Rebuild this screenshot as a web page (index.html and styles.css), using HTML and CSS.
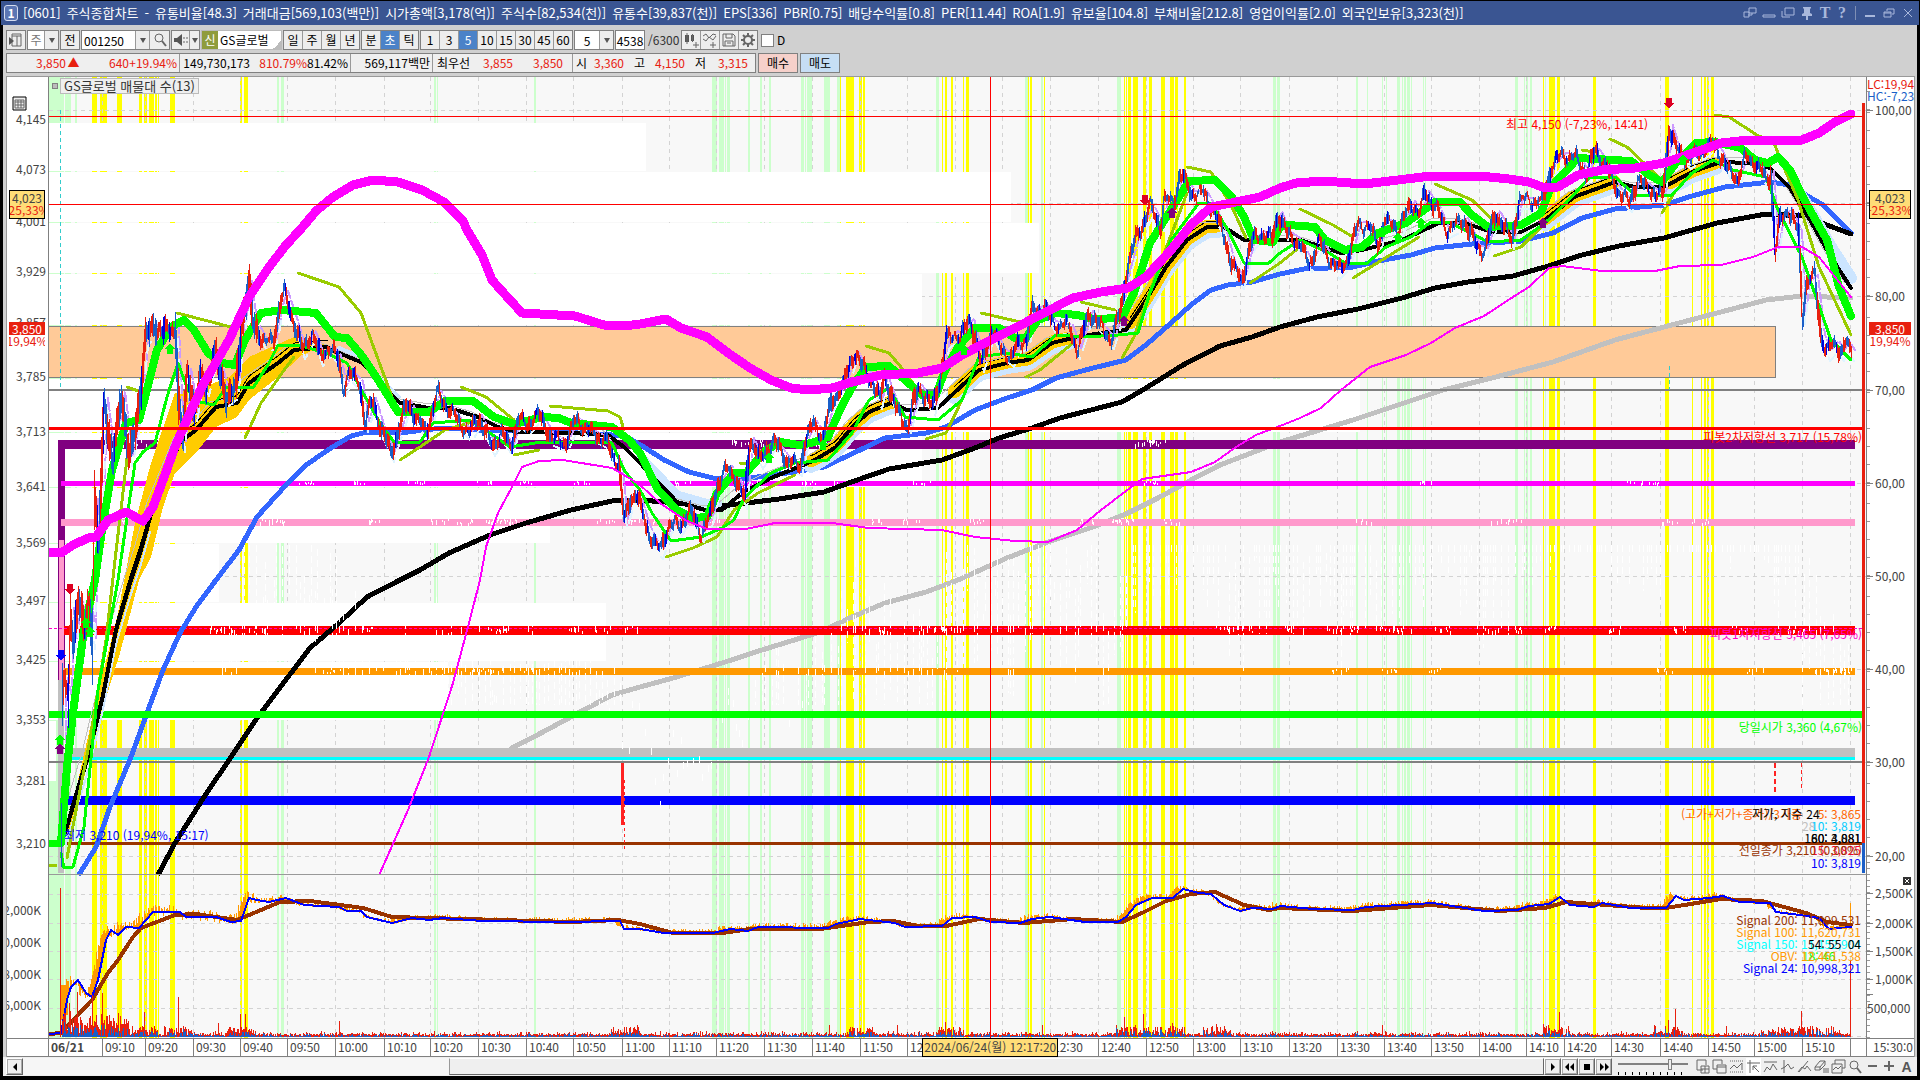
FILE: index.html
```html
<!DOCTYPE html>
<html lang="ko">
<head>
    <meta charset="UTF-8">
    <meta name="viewport" content="width=device-width, initial-scale=1.0">
    <title>[0601] 주식종합차트</title>
    <link rel="stylesheet" href="styles.css">
</head>
<body>
    <header class="titlebar">
        <span class="win-no">1</span>
        <h1>
            <span>[0601]</span><span>주식종합차트</span><span>-</span><span>유통비율[48.3]</span><span>거래대금[569,103(백만)]</span>
            <span>시가총액[3,178(억)]</span><span>주식수[82,534(천)]</span><span>유통수[39,837(천)]</span><span>EPS[336]</span><span>PBR[0.75]</span>
            <span>배당수익률[0.8]</span><span>PER[11.44]</span><span>ROA[1.9]</span><span>유보율[104.8]</span><span>부채비율[212.8]</span>
            <span>영업이익률[2.0]</span><span>외국인보유[3,323(천)]</span>
        </h1>
        <div class="win-buttons">
            <button aria-label="연결"><svg width="14" height="14" viewBox="0 0 14 14"><path d="M6 2h7v5H6zM1 6h5v5H1zM5 9h4V7"/></svg></button>
            <button aria-label="내리기"><svg width="14" height="14" viewBox="0 0 14 14"><path d="M1 9h12v2H1z"/></svg></button>
            <button aria-label="복사"><svg width="14" height="14" viewBox="0 0 14 14"><path d="M4 2h9v7H4zM1 5v6h8"/></svg></button>
            <button aria-label="고정"><svg width="14" height="14" viewBox="0 0 14 14"><path class="solid" d="M3 1h8v1l-1 1v4l2 1v2H8v4H6v-4H2V8l2-1V3L3 2z"/></svg></button>
            <button class="serif">T</button>
            <button class="serif">?</button>
            <i></i>
            <button aria-label="최소화"><svg width="14" height="14" viewBox="0 0 14 14"><path class="solid" d="M2 9h10v2H2z"/></svg></button>
            <button aria-label="이전 크기"><svg width="14" height="14" viewBox="0 0 14 14"><path d="M5 5V3h7v5h-2M2 6h7v5H2zM2 7h7"/></svg></button>
            <button aria-label="닫기"><svg width="14" height="14" viewBox="0 0 14 14"><path d="M3 3l8 8M11 3l-8 8"/></svg></button>
        </div>
    </header>

    <main>
        <div class="toolbar">
            <button class="tool" aria-label="목록"><svg width="16" height="16" viewBox="0 0 16 16"><path d="M4 2h9v12H4zM4 4h9M9 4v10"/><path class="dark" d="M1 5l5 4-5 4z"/></svg></button>
            <div class="combo"><button class="c17 dim">주</button><button class="arrow" aria-label="열기"></button></div>
            <button class="tool">전</button>
            <div class="combo">
                <input class="c54" type="text" value="001250" aria-label="종목코드"><button class="arrow" aria-label="종목 목록"></button><button class="tool" aria-label="찾기"><svg width="16" height="16" viewBox="0 0 16 16"><circle cx="7" cy="6" r="4"/><path class="fat" d="M10 9l4 5"/></svg></button>
            </div>
            <div class="combo"><button class="tool" aria-label="소리"><svg width="16" height="16" viewBox="0 0 16 16"><path class="dark" d="M1 6h3l5-4v12L4 10H1z"/><path d="M11 5v2M11 9v2M14 5v2M14 9v2"/></svg></button><button class="arrow small" aria-label="소리 설정"></button></div>
            <div class="stock"><b>신</b><span>GS글로벌</span></div>
            <div class="group"><button>일</button><button>주</button><button>월</button><button>년</button></div>
            <div class="group"><button>분</button><button class="on">초</button><button>틱</button></div>
            <div class="group"><button>1</button><button>3</button><button class="on">5</button><button>10</button><button>15</button><button>30</button><button>45</button><button>60</button></div>
            <div class="combo"><input class="c25 mid" type="text" value="5" aria-label="주기"><button class="arrow" aria-label="주기 목록"></button></div>
            <div class="combo"><input class="c29 mid" type="text" value="4538" aria-label="조회 수"></div>
            <span class="total">/6300</span>
            <div class="group">
                <button aria-label="차트 추가"><svg width="16" height="16" viewBox="0 0 16 16"><path class="dark" d="M2 3h4v7H2zM8 3h3v6H8z"/><path d="M4 1v11M9.5 2v8M10 13h6M13 10v6"/></svg></button>
                <button aria-label="지표 추가"><svg width="16" height="16" viewBox="0 0 16 16"><path d="M1 4l3-2 3 4 4-4 3 1M1 7l3 2 3-4 4 3 3-4M8 13h6M11 10v6"/></svg></button>
                <button aria-label="저장"><svg width="16" height="16" viewBox="0 0 16 16"><path d="M2 2h10l2 2v10H2zM5 2v4h6V2M4 14V9h8v5M6 11h4"/></svg></button>
                <button aria-label="설정"><svg width="16" height="16" viewBox="0 0 16 16"><circle cx="8" cy="8" r="4" class="fat"/><path class="fat" d="M8 1v3M8 12v3M1 8h3M12 8h3M3 3l2 2M11 11l2 2M13 3l-2 2M5 11l-2 2"/></svg></button>
            </div>
            <label class="check"><input type="checkbox">D</label>
        </div>

        <div class="quote">
            <div class="prices">
                <span class="up">3,850</span><span class="up tri">▲</span><span class="up">640</span><span class="up line">+19.94%</span>
                <span>149,730,173</span><span class="up">810.79%</span><span class="line">81.42%</span>
                <span class="line">569,117백만</span>
                <span>최우선</span><span class="up">3,855</span><span class="up">3,850</span><i class="line"></i>
                <span>시</span><span class="up">3,360</span><span>고</span><span class="up">4,150</span><span>저</span><span class="up">3,315</span>
            </div>
            <button class="buy">매수</button>
            <button class="sell">매도</button>
        </div>

        <section class="chart">
            <div class="axis left">
                <ul class="scale" id="scale-left"></ul>
                <svg class="grid-icon" width="15" height="15" viewBox="0 0 15 15"><path d="M1 1h13v13H1z" class="box"/><path d="M3 4h9v8H3zM3 6h9M3 9h9M6 4v8M9 4v8"/></svg>
                <p class="cross-tag"><span>4,023</span><span class="up">-25,33%</span></p>
                <p class="now-tag"><b>3,850</b><span>19,94%</span></p>
            </div>
            <div class="plot" id="plot">
                <svg id="canvas" viewBox="49 77 1817 961" preserveAspectRatio="none"></svg>
                <p class="legend"><i></i><span>GS글로벌 매물대 수(13)</span></p>
            </div>
            <div class="axis right">
                <ul class="scale" id="scale-right"></ul>
                <p class="limits"><span class="up">LC:19,94</span><span class="down">HC:-7,23</span></p>
                <p class="cross-tag"><span>4,023</span><span class="up">-25,33%</span></p>
                <p class="now-tag"><b>3,850</b><span>19,94%</span></p>
                <button class="close-pane" aria-label="닫기"><svg width="8" height="8" viewBox="0 0 8 8"><path d="M2 2l4 4M6 2l-4 4"/></svg></button>
            </div>
            <div class="time">
                <ol id="times"></ol>
                <p class="time-tag">2024/06/24(월) 12:17:20</p>
            </div>
        </section>

        <footer class="bottom">
            <button class="step" aria-label="왼쪽"><svg width="12" height="12" viewBox="0 0 12 12"><path d="M8 2v8L4 6z"/></svg></button>
            <div class="track"><div class="thumb"></div></div>
            <button class="step" aria-label="재생"><svg width="12" height="12" viewBox="0 0 12 12"><path d="M4 2v8l4-4z"/></svg></button>
            <button class="step" aria-label="뒤로"><svg width="12" height="12" viewBox="0 0 12 12"><path d="M5 2v8L1 6zM10 2v8L6 6z"/></svg></button>
            <button class="step" aria-label="정지"><svg width="12" height="12" viewBox="0 0 12 12"><path d="M3 3h6v6H3z"/></svg></button>
            <button class="step" aria-label="앞으로"><svg width="12" height="12" viewBox="0 0 12 12"><path d="M2 2v8l4-4zM7 2v8l4-4z"/></svg></button>
            <div class="speed"><input type="range" min="0" max="100" value="75" aria-label="속도"></div>
            <div class="icons">
                <button aria-label="추가"><svg width="15" height="15" viewBox="0 0 15 15"><path d="M8 11H2V1h9v5M6 7h8v7H6zM10 7v7M6 10h8"/></svg></button>
                <button aria-label="겹치기"><svg width="15" height="15" viewBox="0 0 15 15"><path d="M5 10H1V1h9v4M5 6h9v8H5zM5 8h9"/></svg></button>
                <button aria-label="구간"><svg width="15" height="15" viewBox="0 0 15 15"><path class="dash" d="M1 2h13M1 13h13"/><path d="M1 10l4-4 3 3 5-5M13 4v7"/></svg></button>
                <button class="on" aria-label="십자선"><svg width="15" height="15" viewBox="0 0 15 15"><path d="M1 4h13M4 1v13M7 7l6 6M7 11V7h4"/></svg></button>
                <button aria-label="수평선"><svg width="15" height="15" viewBox="0 0 15 15"><path d="M1 3h13M1 13l3-5 3 3 3-6 4 6"/></svg></button>
                <button aria-label="수직선"><svg width="15" height="15" viewBox="0 0 15 15"><path d="M4 1v13M1 10l4-2 3-3 3 5 3-2"/></svg></button>
                <button aria-label="추세선"><svg width="15" height="15" viewBox="0 0 15 15"><path d="M2 13L11 2M1 13l4-5 3 2 2-3 4 5"/></svg></button>
                <button aria-label="지우기"><svg width="15" height="15" viewBox="0 0 15 15"><path d="M1 8l5-6h5v4l-5 5H1zM1 8h5l5-6M6 8v3M10 9v5M12 9v5M14 9v5"/></svg></button>
                <button aria-label="그림"><svg width="15" height="15" viewBox="0 0 15 15"><path d="M4 5V1h10v8h-3M1 5h10v9H1zM2 11l3-3 2 2 3-3"/></svg></button>
                <button aria-label="돋보기"><svg width="15" height="15" viewBox="0 0 15 15"><circle cx="6" cy="6" r="4"/><path class="fat" d="M9 9l4 5"/></svg></button>
                <button aria-label="축소"><svg width="15" height="15" viewBox="0 0 15 15"><path class="fat" d="M3 7h9"/></svg></button>
                <button aria-label="확대"><svg width="15" height="15" viewBox="0 0 15 15"><path class="fat" d="M2 7h10M7 2v10"/></svg></button>
                <button class="letter">A</button>
            </div>
        </footer>
    </main>

    <script src="chart.js"></script>
</body>
</html>
```
FILE: styles.css
```css
* {
    box-sizing: border-box;
}

body {
    margin: 0;
    padding: 1px 1px 4px;
    height: 100vh;
    display: flex;
    flex-direction: column;
    background: #000;
    color: #000;
    font: 12px/14px "Noto Sans CJK KR", sans-serif;
    overflow: hidden;
}

h1, p, ul, ol {
    margin: 0;
    padding: 0;
    font-weight: normal;
    list-style: none;
}

button, input {
    font: inherit;
    color: inherit;
    margin: 0;
    padding: 0;
    border: 0;
    border-radius: 0;
    background: none;
}

svg {
    display: block;
    fill: none;
    stroke: #666;
}

.up {
    color: #e8200f;
}

.down {
    color: #1a5fc8;
}

/* title bar */
.titlebar {
    display: flex;
    align-items: center;
    height: 24px;
    padding: 0 4px 0 3px;
    background: #3a5592;
    color: #fff;
}

.titlebar h1 {
    flex: 1;
    display: flex;
    gap: 6px;
    margin-left: 5px;
    font-size: 13px;
    line-height: 20px;
    white-space: nowrap;
}

.win-no {
    width: 14px;
    height: 16px;
    border: 1px solid #d5ddf0;
    border-radius: 3px;
    background: #5b76b4;
    text-align: center;
    font-weight: bold;
}

.win-buttons {
    display: flex;
    align-items: center;
    gap: 5px;
}

.win-buttons svg {
    stroke: #a9b8dc;
}

.win-buttons .solid {
    fill: #a9b8dc;
    stroke: none;
}

.win-buttons i {
    width: 1px;
    height: 14px;
    margin: 0 2px;
    background: #7f8fb5;
}

.win-buttons .serif {
    width: 12px;
    font: bold 16px/16px "Liberation Serif", serif;
    color: #a9b8dc;
}

main {
    flex: 1;
    min-height: 0;
    display: flex;
    flex-direction: column;
    margin: 0 2px;
    background: #d0d0d0;
}

/* tool bar */
.toolbar {
    display: flex;
    align-items: center;
    gap: 1px;
    height: 20px;
    margin: 5px 3px 3px;
}

.toolbar svg {
    margin: 0 auto;
}

.toolbar .dark {
    fill: #555;
    stroke: none;
}

.toolbar .fat, .bottom .fat {
    stroke-width: 2;
}

.tool, .combo, .group, .stock {
    height: 20px;
    border: 1px solid #808080;
    background: #ededed;
}

.tool {
    width: 20px;
}

.combo, .group, .stock {
    display: flex;
}

.combo .tool {
    height: 18px;
    border: 0;
    border-left: 1px solid #999;
}

.combo input, .combo button:first-child {
    height: 18px;
    background: #fff;
}

.combo .tool:first-child {
    width: 17px;
    border: 0;
    background: #ededed;
}

.c17 { width: 16px; }
.c25 { width: 24px; }
.c29 { width: 28px; }
.c54 { width: 53px; padding-left: 2px; }

.dim {
    color: #777;
}

.mid {
    text-align: center;
}

.arrow {
    width: 14px;
    height: 18px;
    border-left: 1px solid #999;
    background: #ededed;
}

.arrow.small {
    width: 10px;
}

.arrow::after {
    content: "";
    display: block;
    width: 0;
    margin: 0 auto;
    border: 3px solid transparent;
    border-top: 5px solid #555;
    border-bottom: 0;
}

.stock {
    width: 81px;
    background: #fff;
    border-color: #bbb;
    line-height: 18px;
    background-image: linear-gradient(135deg, transparent 50%, #bbb 50%);
    background-size: 8px 8px;
    background-position: right bottom;
    background-repeat: no-repeat;
}

.stock b {
    width: 16px;
    margin-right: 2px;
    background: #8f9c3c;
    color: #fff;
    font-weight: normal;
    text-align: center;
}

.group button {
    width: 19px;
    height: 18px;
    border-right: 1px solid #999;
}

.group button:last-child {
    width: 18px;
    border-right: 0;
}

.group .on {
    background: #4b82c8;
    color: #fff;
}

.total {
    width: 34px;
    padding-left: 2px;
    color: #333;
}

.check {
    display: flex;
    align-items: center;
    gap: 3px;
    margin-left: 2px;
}

.check input {
    appearance: none;
    width: 13px;
    height: 13px;
    border: 1px solid #808080;
    background: #fff;
}

/* quote line */
.quote {
    display: flex;
    gap: 2px;
    height: 20px;
    margin: 0 3px 3px;
}

.prices {
    display: grid;
    grid-template-columns: 59px 15px 48px 51px 70px 57px 44px 82px 37px 43px 50px 10px 14px 37px 21px 40px 21px 42px;
    width: 750px;
    border: 1px solid #808080;
    background: #efefef;
    line-height: 18px;
    text-align: right;
    white-space: nowrap;
}

.prices .tri {
    text-align: center;
}

.prices .line {
    border-right: 1px solid #999;
    padding-right: 2px;
}

.quote button {
    width: 40px;
    border: 1px solid #808080;
}

.quote .buy {
    background: #f6d0ca;
}

.quote .sell {
    background: #c6def4;
}

/* chart */
.chart {
    position: relative;
    flex: 1;
    min-height: 0;
    display: grid;
    grid-template-columns: 41px minmax(0, 1fr) 48px;
    grid-template-rows: minmax(0, 1fr) 19px;
    margin: 0 2px 0 3px;
    border: 1px solid #999;
    border-bottom: 0;
    background: #fff;
}

.axis {
    position: relative;
    min-height: 0;
    overflow: hidden;
    color: #444;
}

.axis.right {
    border-left: 1px solid #808080;
}

.scale {
    display: flex;
    flex-direction: column;
    height: 100%;
}

.scale li {
    flex-basis: 0;
    min-height: 0;
    display: flex;
    align-items: flex-end;
    justify-content: flex-end;
}

.scale span {
    margin-bottom: -7px;
    padding-right: 2px;
}

.scale .vol {
    padding-right: 5px;
}

.right .scale li {
    justify-content: flex-start;
    background: repeating-linear-gradient(to top, #999 0 1px, transparent 1px 18px) left / 3px 100% no-repeat;
}

.right .scale li.vol {
    background-image: repeating-linear-gradient(to top, #999 0 1px, transparent 1px 6px);
    padding: 0;
}

.right .scale span {
    padding: 0;
}

.right .scale span::before {
    content: "";
    display: inline-block;
    width: 6px;
    height: 1px;
    margin: 0 2px 4px 0;
    background: #808080;
}

.grid-icon {
    position: absolute;
    left: 5px;
    top: 19px;
}

.grid-icon .box {
    stroke: #000;
    fill: #eee;
}

.cross-tag, .now-tag {
    position: absolute;
    left: 2px;
    right: 3px;
    display: flex;
    flex-direction: column;
    align-items: center;
    line-height: 12px;
    white-space: nowrap;
    overflow: hidden;
}

.cross-tag {
    top: 113px;
    height: 29px;
    padding: 1px 0;
    border: 1px solid #000;
    background: #ffdd77;
}

.now-tag {
    top: 245px;
    color: #e8200f;
}

.now-tag b {
    align-self: stretch;
    line-height: 13px;
    text-align: center;
    font-weight: normal;
    background: #e8200f;
    color: #fff;
}

.limits {
    position: absolute;
    left: 0;
    top: 1px;
    line-height: 12px;
    white-space: nowrap;
}

.limits span {
    display: block;
}

.close-pane {
    position: absolute;
    right: 3px;
    top: 800px;
    width: 8px;
    height: 8px;
    background: #333;
}

.close-pane svg {
    stroke: #fff;
}

.plot {
    position: relative;
    min-height: 0;
    border-left: 1px solid #808080;
    background: #f8f8f8;
    overflow: hidden;
}

.plot svg {
    width: 100%;
    height: 100%;
    stroke: none;
    shape-rendering: crispEdges;
}

.legend {
    position: absolute;
    left: 3px;
    top: 1px;
    display: flex;
    align-items: center;
    gap: 2px;
    font-size: 13px;
}

.legend i {
    width: 6px;
    height: 6px;
    border: 1px solid #808080;
    background: #bbb;
}

.legend span {
    padding: 0 3px;
    border: 1px solid #bbb;
    background: #efefef;
    color: #333;
}

.note {
    position: absolute;
    line-height: 12px;
    white-space: nowrap;
}

.time {
    position: relative;
    grid-column: 1 / -1;
    border-top: 1px solid #808080;
    border-bottom: 1px solid #808080;
    color: #444;
}

.time ol {
    display: grid;
    height: 100%;
}

.time li {
    padding-left: 2px;
    border-left: 1px solid #808080;
    line-height: 16px;
    white-space: nowrap;
    overflow: hidden;
}

.time li:first-child {
    border: 0;
}

.time li.day {
    font-weight: bold;
}

.time li:last-child {
    padding-left: 6px;
}

.time-tag {
    position: absolute;
    left: 48%;
    top: -1px;
    height: 19px;
    padding: 0 1px;
    border: 1px solid #000;
    background: #ffdd77;
    line-height: 16px;
    white-space: nowrap;
}

/* scroll bar and small icons */
.bottom {
    display: flex;
    height: 19px;
    padding: 1px 3px;
    background: #efefef;
}

.bottom svg {
    margin: 0 auto;
}

.step {
    width: 17px;
    height: 17px;
    border: 1px solid;
    border-color: #fff #666 #666 #fff;
    background: #efefef;
    box-shadow: 0 0 0 1px #aaa inset;
}

.step svg {
    fill: #000;
    stroke: none;
}

.track {
    flex: 1;
    display: flex;
    justify-content: flex-end;
    background: #f6f6f6;
}

.thumb {
    width: 72%;
    border: 1px solid;
    border-color: #fff #666 #666 #999;
    background: #efefef;
}

.speed {
    width: 70px;
    margin: 0 7px 0 6px;
    background: repeating-linear-gradient(to right, #000 0 1px, transparent 1px 7px) left bottom / 100% 3px no-repeat;
}

.speed input {
    appearance: none;
    display: block;
    width: 100%;
    height: 12px;
    background: linear-gradient(#808080, #808080) left center / 100% 2px no-repeat;
}

.speed input::-webkit-slider-thumb {
    appearance: none;
    width: 4px;
    height: 11px;
    border: 1px solid #808080;
    background: #efefef;
}

.icons {
    display: flex;
    gap: 2px;
}

.icons button {
    width: 15px;
    height: 17px;
}

.icons .on {
    background: #fff;
}

.icons .dash {
    stroke-dasharray: 1 1;
}

.icons .letter {
    font: bold 14px/16px "Liberation Sans", sans-serif;
    color: #555;
}
```
FILE: chart.js
```js
// plot coordinates: x 49..1866, y 77..1038 (price pane ends at 874)
const X0 = 49, Y0 = 77, W = 1817, H = 961;
const svg = document.getElementById('canvas');

let seed = 20240624;
function rnd() {
    seed = (seed * 1103515245 + 12345) % 2147483648;
    return seed / 2147483648;
}

function pts(text) {
    const n = text.trim().split(/[\s,]+/).map(Number);
    const out = [];
    for (let i = 0; i < n.length; i += 2) out.push([n[i], n[i + 1]]);
    return out;
}

let html = '';
function rect(x1, y1, x2, y2, fill) {
    html += `<rect x="${x1}" y="${y1}" width="${x2 - x1}" height="${y2 - y1}" fill="${fill}"/>`;
}
function path(d, color, width, extra) {
    html += `<path d="${d}" fill="none" stroke="${color}" stroke-width="${width}" ${extra || ''}/>`;
}
function toPath(p) {
    return 'M' + p.map(q => q[0].toFixed(1) + ' ' + q[1].toFixed(1)).join('L');
}
function curve(p, color, width, extra) {
    path(toPath(p), color, width, 'stroke-linejoin="round" stroke-linecap="round" ' + (extra || ''));
}
function at(p, x) {
    for (let i = 1; i < p.length; i++) {
        if (x <= p[i][0]) {
            const a = p[i - 1], b = p[i];
            return a[1] + (b[1] - a[1]) * (x - a[0]) / (b[0] - a[0] || 1);
        }
    }
    return p[p.length - 1][1];
}
function slice(p, x1, x2, dy) {
    const out = [];
    for (let x = x1; x <= x2; x += 3) out.push([x, at(p, x) + (dy || 0)]);
    return out;
}

// signal stripes
const green = pts(`49,64 65,71 75,77 277,279 281,284 434,436 437,438 534,536 712,717 719,724 725,726 727,730 748,750 760,762 769,771
801,804 805,806 807,812 824,830 837,840 936,939 1025,1028 1041,1043 1117,1121 1273,1276 1277,1280 1356,1358 1367,1368 1382,1383 1386,1387
1397,1400 1402,1403 1404,1406 1407,1410 1411,1412 1423,1424 1425,1426 1515,1518 1524,1525 1526,1528 1530,1532 1545,1546`);
const yellow = pts(`92,97 100,107 117,122 139,142 144,147 149,154 155,157 158,159 170,175 240,242 244,248 840,841 846,854 859,862 863,865
942,943 945,947 951,953 963,964 966,969 1028,1029 1030,1032 1044,1045 1124,1125 1126,1127 1128,1131 1133,1138 1143,1146 1149,1152
1161,1165 1170,1174 1175,1178 1184,1186 1543,1544 1549,1555 1557,1560 1593,1596 1665,1669 1692,1693 1701,1702 1704,1706 1707,1709 1711,1714`);
green.forEach(s => rect(s[0], Y0, s[1], 1038, '#ccffcc'));
yellow.forEach(s => rect(s[0], Y0, s[1], 1038, '#ffff00'));

// grid
const ticks = [102, 145, 193, 240, 287, 335, 384, 430, 478, 526, 573, 622, 669, 716, 764, 812, 860, 907, 955, 1002, 1050, 1098, 1146,
    1193, 1240, 1289, 1337, 1384, 1431, 1479, 1526, 1564, 1611, 1660, 1708, 1754, 1802, 1850];
const dash = 'stroke-dasharray="4 4"';
ticks.forEach(x => path(`M${x + .5} 77V1038`, '#d3d3d3', 1, dash));
[110, 203, 296, 389, 483, 576, 669, 762, 856, 894, 923, 951, 979, 1008, 1036].forEach(y => path(`M49 ${y + .5}H1866`, '#d3d3d3', 1, dash));

// volume by price
[[123, 171, 646], [172, 222, 1011], [223, 273, 1039], [274, 325, 922], [379, 432, 1360], [433, 487, 922], [488, 543, 550],
    [544, 602, 219], [603, 661, 606], [662, 720, 448], [721, 781, 56]].forEach(b => rect(49, b[0], b[2], b[1], '#ffffff'));
rect(49, 326, 1776, 378, '#808080');
rect(49, 327, 1775, 377, '#ffca98');

const price = pts(`61,840 62,700 64,680 68,700 70,610 73,640 78,600 84,632 88,600 92,640 94,500 98,545 104,400 112,463 121,393 129,457 135,430 141,380
145,337 153,327 161,330 175,330 178,397 182,443 187,370 194,413 200,377 206,387 214,353 220,373 226,397 235,390 241,330 248,283 253,323
265,343 273,340 280,303 284,293 294,323 302,350 312,333 320,357 329,347 337,357 343,387 349,373 359,383 365,423 372,400 382,433 391,453
398,430 407,403 416,420 426,430 437,393 449,410 459,423 469,433 478,417 492,447 500,433 510,447 518,417 526,427 537,413 551,437 565,443
575,420 592,433 606,440 612,457 618,463 624,520 631,497 637,493 640,507 646,527 654,543 660,550 669,523 679,527 689,510 701,533 711,513
717,483 728,468 736,480 744,500 750,440 760,460 773,440 781,453 787,460 799,467 805,440 813,423 822,437 832,400 842,387 854,353 862,367
873,383 879,400 884,377 895,407 907,427 918,387 932,407 940,377 946,340 954,333 960,337 970,320 981,363 991,330 1001,350 1011,358 1018,343
1026,340 1032,310 1044,307 1052,323 1069,327 1077,350 1089,313 1101,327 1111,340 1120,310 1126,273 1136,237 1150,207 1160,227 1164,200
1173,203 1180,173 1191,193 1203,193 1213,210 1224,237 1232,267 1241,280 1252,240 1260,233 1271,240 1278,213 1286,233 1296,240 1309,263
1319,243 1337,270 1347,260 1358,223 1368,227 1378,243 1384,220 1398,230 1411,203 1419,213 1425,193 1437,210 1445,230 1464,220 1476,247
1484,250 1496,213 1511,240 1519,200 1531,200 1541,203 1551,167 1562,155 1574,157 1586,173 1595,150 1606,167 1617,190 1629,203 1637,180
1647,187 1662,197 1669,127 1676,150 1688,160 1711,143 1719,153 1729,173 1737,177 1745,157 1755,163 1766,180 1770,173 1775,250 1780,220
1788,210 1798,233 1802,315 1806,283 1814,277 1821,337 1827,352 1835,343 1841,352 1845,343 1851,352`);
const fast = pts(`65,833 88,757 102,700 116,630 131,580 141,550 153,507 180,442 196,430 216,407 237,403 249,383 278,363 294,350 326,347 339,353
363,363 380,383 400,403 429,408 449,408 478,417 498,427 518,432 571,433 608,435 624,447 640,463 656,480 677,502 705,510 722,510 742,493
771,478 791,470 815,460 836,447 852,427 869,412 891,403 907,410 938,408 954,393 979,370 1007,363 1028,360 1052,343 1073,338 1101,333
1126,330 1146,300 1166,267 1187,240 1207,227 1224,227 1244,240 1280,240 1300,240 1341,253 1362,250 1402,240 1439,223 1464,223 1492,232
1521,232 1545,220 1574,197 1615,182 1635,187 1664,187 1692,172 1721,162 1749,163 1770,168 1790,188 1810,220 1831,257 1851,288`);
const slow = pts(`159,873 175,843 204,797 229,760 257,718 288,677 310,648 339,623 367,597 400,580 420,570 449,553 490,535 526,523 571,510 612,501
640,500 677,503 722,506 779,499 824,492 860,479 889,469 942,460 975,448 999,438 1032,428 1060,418 1122,402 1146,388 1183,365 1220,346
1252,337 1280,327 1317,317 1358,309 1402,298 1435,288 1468,282 1513,276 1545,267 1582,255 1619,246 1664,238 1717,223 1766,214 1802,216
1827,225 1851,234`);
const blue = pts(`80,873 96,847 110,807 131,757 147,713 163,670 180,633 196,607 216,580 239,550 257,517 286,485 306,465 331,448 351,436 367,432
408,432 441,428 478,430 571,432 625,436 644,447 664,460 689,472 717,479 750,478 787,473 824,467 860,450 885,438 926,433 946,427 975,410
1007,398 1032,390 1056,378 1093,368 1126,360 1146,345 1171,323 1191,305 1211,290 1228,285 1252,282 1280,274 1304,269 1353,267 1378,261
1411,255 1435,248 1472,244 1521,241 1553,233 1582,218 1615,209 1664,205 1692,196 1725,187 1770,182 1790,185 1806,195 1823,205 1851,233`);
const silver = pts(`512,748 543,732 580,712 612,695 640,687 673,678 722,663 762,650 820,632 852,617 885,603 926,592 958,580 1007,558
1048,542 1093,527 1126,514 1158,498 1191,480 1220,465 1280,442 1353,420 1398,405 1443,390 1496,377 1553,362 1615,340 1664,327 1721,312
1766,300 1802,296 1851,298`);
const magenta = pts(`49,552 61,553 73,545 88,538 96,537 108,520 126,512 143,521 153,507 163,480 175,447 188,417 204,383 229,340 249,297 269,267
286,245 300,230 316,211 333,197 353,185 373,180 398,182 422,190 444,202 463,221 467,230 482,255 492,280 510,300 522,313 575,316 604,325
624,326 640,324 666,319 681,328 707,337 728,353 750,368 771,380 791,388 809,390 832,388 852,382 881,375 918,373 942,368 962,355 987,342
1015,328 1044,313 1073,298 1101,292 1128,288 1146,277 1171,250 1191,225 1211,207 1236,202 1260,197 1280,188 1296,183 1323,181 1364,184
1398,180 1431,176 1480,176 1509,179 1529,182 1545,188 1558,187 1578,175 1602,170 1635,168 1664,163 1696,152 1721,143 1749,140 1802,140
1819,133 1835,122 1851,114`);
const thinMagenta = pts(`380,873 408,810 429,757 453,683 469,623 480,580 486,547 498,513 512,487 522,467 539,461 563,460 612,468 629,478 640,485
660,503 685,520 707,529 746,529 775,523 832,523 869,528 942,530 975,537 1015,541 1048,542 1077,530 1101,510 1134,485 1142,479 1191,472
1215,462 1236,447 1256,435 1280,426 1300,418 1321,408 1341,390 1370,367 1406,355 1431,343 1455,328 1484,316 1513,297 1529,287 1549,268
1562,266 1602,271 1655,271 1680,266 1721,265 1753,257 1778,247 1802,247 1819,257 1835,277 1851,297`);
const greenTop = pts(`61,843 67,767 73,713 84,630 95,580 102,530 112,470 126,423 139,420 147,390 157,350 171,327 184,320 194,330 208,353 222,363
235,365 245,340 261,313 282,310 316,313 335,337 347,338 363,357 380,383 398,412 429,412 445,401 473,401 494,417 514,424 543,417 559,418
571,423 612,427 629,440 640,453 658,490 677,510 693,518 707,517 717,493 734,473 746,473 766,450 781,442 799,445 811,443 828,437 840,410
852,387 866,367 889,366 905,380 922,395 936,395 944,373 958,347 975,328 999,328 1015,338 1026,338 1038,320 1056,313 1077,315 1093,319
1122,318 1134,293 1150,243 1171,210 1189,181 1215,180 1232,197 1244,217 1254,240 1273,242 1280,227 1288,225 1315,227 1325,240 1345,250
1362,247 1378,233 1406,223 1435,202 1460,202 1472,215 1488,227 1521,225 1541,213 1551,187 1578,158 1631,161 1649,175 1662,182 1676,163
1696,143 1715,142 1741,148 1755,160 1768,163 1778,157 1790,170 1806,203 1827,240 1839,287 1851,316`);
const greenLow = pts(`61,853 64,868 73,867 84,827 98,690 118,580 135,463 143,452 155,443 167,397 178,363 188,390 200,402 214,405 226,387 253,388
269,363 278,345 298,345 326,353 347,363 363,393 380,423 394,442 420,442 433,423 469,420 490,433 510,447 535,443 571,442 612,443 624,470
640,490 652,513 671,541 701,537 722,528 734,520 744,498 771,473 795,463 828,460 852,433 869,400 889,388 905,417 938,420 962,400 979,357
1007,353 1032,357 1056,335 1085,337 1118,335 1138,333 1150,293 1171,240 1199,203 1211,203 1228,230 1244,263 1269,263 1280,253 1300,240
1329,253 1345,263 1366,264 1386,247 1411,237 1431,222 1451,223 1488,242 1521,240 1545,223 1566,203 1590,177 1615,177 1635,195 1672,195
1692,173 1713,160 1733,170 1766,177 1778,210 1802,257 1831,340 1851,360`);

// slow averages stay behind the level lines
curve(silver, '#c0c0c0', 5);

// level lines
function noise(y, h, n, from, to) {
    for (let i = 0; i < n; i++) {
        const c = from + rnd() * (to - from);
        for (let k = 0; k < 7; k++) {
            const x = Math.round(c + rnd() * 18), top = y + Math.floor(rnd() * h * .6);
            rect(x, top, x + 1, top + 2 + Math.floor(rnd() * h * .4), '#ffffff');
        }
    }
}
rect(58, 440, 65, 680, '#800080');
rect(59, 540, 64, 680, '#ff99cc');
rect(58, 680, 64, 873, '#c0c0c0');
rect(60, 440, 1855, 449, '#800080');
rect(61, 481, 1855, 486, '#ff00ff');
rect(61, 519, 1855, 526, '#ff99cc');
rect(64, 626, 1855, 635, '#ff0000');
path('M49 628.5H1862', '#ff00cc', 1, 'stroke-dasharray="3 2"');
rect(64, 668, 1855, 675, '#ff9900');
rect(69, 748, 1855, 757, '#c0c0c0');
rect(69, 757, 1855, 760, '#00ffff');
rect(66, 796, 1855, 805, '#0000ff');
noise(440, 9, 4, 62, 150);
noise(440, 9, 3, 710, 860);
noise(440, 9, 3, 1120, 1150);
noise(481, 5, 10, 80, 900);
noise(481, 5, 5, 900, 1700);
noise(519, 7, 26, 80, 1760);
noise(626, 9, 28, 170, 1840);
noise(668, 7, 5, 300, 700);
noise(668, 7, 8, 1200, 1840);
rect(49, 389, 1863, 391, '#808080');
rect(49, 761, 1863, 763, '#808080');
rect(49, 711, 1863, 718, '#00ff00');
rect(49, 842, 1863, 845, '#993300');
rect(49, 840, 61, 847, '#00ff00');
rect(49, 864, 57, 867, '#99cc00');
path('M60.5 110V390', '#33cccc', 1, 'stroke-dasharray="4 3"');
path('M1669.5 366V390', '#33cccc', 1, 'stroke-dasharray="4 3"');
path('M622.5 763V825', '#ff2222', 3);
path('M624.5 780V852', '#ff2222', 1, 'stroke-dasharray="3 3"');
path('M1774.5 763V792', '#ff2222', 2, 'stroke-dasharray="5 3"');
path('M1801.5 763V788', '#ff2222', 1, 'stroke-dasharray="4 3"');

curve(blue, '#3366ff', 5);
curve(slow, '#000', 5);

// white traces under the price
let traces = '';
for (let x = 222; x < 1850; x += 2 + Math.floor(rnd() * 6)) {
    const mid = at(price, x) + 260 - (x > 1100 ? -60 : 0);
    const top = Math.max(545, mid - rnd() * 60);
    traces += `M${x + .5} ${top.toFixed(0)}V${Math.max(top + 10, Math.min(705, mid + rnd() * 90)).toFixed(0)}`;
}
path(traces, '#ffffff', 1, 'stroke-dasharray="7 4"');
rect(64, 711, 1850, 718, '#00ff00');

// cloud
html += '<path fill="#ffcc00" d="M66 833L98 693 118 613 135 523 151 463 175 393 204 387 229 377 249 357 294 337 326 345 302 355 278 377 249 400 237 417 216 427 196 453 175 473 163 507 151 557 139 580 120 653 98 723 69 837z"/>';
curve(slice(fast, 66, 150, 14), '#cce5ff', 2);
curve(slice(fast, 339, 400, -5), '#cce5ff', 4);
curve(slice(fast, 640, 720, -7), '#cce5ff', 9);
curve(slice(fast, 1800, 1851, -10), '#cce5ff', 12);
[[811, 893], [954, 1068], [1130, 1218], [1545, 1615], [1670, 1715]].forEach(b => {
    curve(slice(fast, b[0], b[1], 3), '#cce5ff', 16);
    curve(slice(fast, b[0], b[1], -1), '#ffcc00', 13);
    curve(slice(fast, b[0], b[1], -6), '#000', 1);
});
curve(fast.map(p => [p[0] - 6, p[1] - 5]), '#c0c0c0', 1);
curve(fast, '#000', 4);
curve(slice(fast, 70, 330, -7), '#000', 1);

// bands
[`127,387 141,392`, `177,313 231,327`, `245,438 261,403 282,373 294,357`, `298,273 339,287 361,313 392,397`, `400,460 420,447 445,430 469,423`,
    `461,387 486,397 514,420`, `514,455 539,450`, `550,406 608,411 620,417 624,430`, `666,557 693,548 717,537 734,510 758,493 795,475`,
    `740,463 748,464`, `866,346 889,353 901,367 922,395`, `926,439 946,433 962,400 975,367`, `981,313 1020,322`, `1026,377 1040,370 1073,343`,
    `1081,302 1115,310`, `1122,358 1134,337 1154,280 1187,193`, `1187,167 1211,172 1232,207 1246,238`, `1250,283 1280,263 1300,247`,
    `1300,209 1333,225 1353,237`, `1353,278 1382,260 1419,237`, `1435,184 1472,200 1496,223`, `1494,256 1521,247 1545,223`, `1582,150 1594,152`,
    `1610,139 1627,147 1662,180`, `1662,213 1676,190`, `1715,115 1729,117 1757,135 1774,143 1782,163 1798,200 1819,267 1851,335`,
    `67,858 78,800 90,740 106,640 115,560 128,450`
].forEach(t => curve(pts(t), '#99cc00', 3));
curve(price.map(p => [p[0] + 4, p[1] - 2]), '#cc99ff', 2, 'stroke-dasharray="9 3"');
curve(price.slice(4).map(p => [p[0] + 3, p[1] + 9]), '#e0f4ff', 2, 'stroke-dasharray="12 9"');
curve(greenTop, '#00ff00', 8);
curve(greenLow, '#00ff00', 3);

// candles
let red = '', navy = '', deep = '';
let run = 0, isRed = true;
for (let x = 61; x <= 1851; x++) {
    if (--run < 0) {
        isRed = !isRed;
        run = 1 + Math.floor(rnd() * 3);
    }
    const wave = Math.sin(x * .9) * 3 + Math.sin(x * .37) * 4;
    const y = at(price, x) + wave + (rnd() - .5) * 4;
    const slope = Math.min(50, Math.abs(at(price, x + 1) - at(price, x - 1)));
    const h = 2 + rnd() * 4 + slope * .5 + (x < 260 ? rnd() * 10 : 0);
    const d = `M${x + .5} ${(y - h).toFixed(0)}v${(h * 2).toFixed(0)}`;
    if (isRed) red += d;
    else if (rnd() < .25) deep += d;
    else navy += d;
}
path(red, '#e8200f', 1);
path(navy, '#1a5fc8', 1);
path(deep, '#0000e0', 1);
curve(magenta, '#ff00ff', 9);
curve(thinMagenta, '#ff00ff', 2);

// signal arrows
function arrow(x, y, dir, color) {
    html += `<path fill="${color}" d="M${x} ${y + 6 * dir}l5 ${-6 * dir}h-2v${-5 * dir}h-6v${5 * dir}h-2z"/>`;
}
[[70, 589], [1145, 200], [1669, 103]].forEach(a => arrow(a[0], a[1], 1, '#dd0022'));
[[170, 349], [86, 623], [90, 632], [60, 740], [769, 458], [823, 445], [964, 350], [1382, 232], [1398, 238], [1421, 223], [1683, 160]].forEach(a => arrow(a[0], a[1], -1, '#00ff00'));
[[60, 749], [1124, 321], [1172, 213], [1543, 223]].forEach(a => arrow(a[0], a[1], -1, '#800080'));
arrow(61, 655, 1, '#0000ff');

// horizontal marks
rect(49, 427, 1863, 430, '#ff0000');
rect(49, 116, 1863, 117, '#ff0000');
rect(49, 204, 1863, 205, '#ff0000');
rect(1862, 103, 1865, 843, '#e8200f');
rect(1862, 843, 1865, 873, '#1a5fc8');
rect(49, 874, 1866, 875, '#999999');

// OBV pane
const obv = pts(`49,1034 61,1033 67,1000 71,987 78,980 86,993 92,997 98,980 106,940 111,930 118,935 126,927 139,928 153,912 180,912 186,917
216,917 231,922 241,921 249,898 257,900 269,902 286,898 304,905 339,907 347,911 361,911 367,917 392,923 412,918 429,920 443,918 482,921
563,922 620,921 624,929 640,929 664,933 713,933 730,929 748,931 758,927 828,928 836,924 860,919 895,923 905,927 942,926 952,918 975,917
991,922 1020,923 1032,919 1050,917 1085,922 1118,922 1126,917 1136,905 1152,898 1173,898 1183,889 1199,893 1211,894 1224,905 1240,911
1252,908 1273,909 1280,906 1313,909 1353,910 1366,907 1433,903 1484,911 1517,910 1529,906 1549,904 1560,897 1570,905 1594,907 1602,903
1631,908 1666,908 1676,896 1684,900 1709,898 1723,896 1739,902 1770,903 1776,912 1800,915 1819,918 1829,929 1851,927`);
const signal = pts(`49,1034 61,1033 92,1000 108,973 118,960 133,937 141,928 175,915 196,914 237,920 261,910 280,902 310,901 363,908 392,917
571,922 618,920 640,924 673,933 722,933 750,929 820,929 869,922 893,921 918,926 946,926 979,919 1024,923 1073,919 1122,922 1142,913
1166,901 1191,894 1215,892 1244,905 1269,910 1280,908 1353,911 1431,905 1500,911 1545,908 1566,902 1647,908 1666,908 1721,899 1762,901
1806,913 1827,922 1851,925`);
let orange = '';
for (let x = 62; x <= 1851; x++) {
    const lead = at(obv, x + 6);
    const y = at(obv, x);
    orange += `M${x + .5} ${(y + 1).toFixed(1)}L${x + .5} ${(lead - 2 + (rnd() - .5) * (x < 260 ? 12 : 5)).toFixed(1)}`;
}
path(orange, '#ff9900', 1);
rect(61, 985, 65, 1020, '#ff9900');
rect(65, 1000, 68, 1015, '#ff9900');
rect(1850, 903, 1851, 927, '#ff9900');
curve(signal, '#993300', 4);
curve(obv, '#0000ff', 2);

// traded volume
let volRed = '', volBlue = '';
const busy = [60, 76, 92, 102, 120, 145, 178, 240, 625, 860, 950, 1128, 1143, 1170, 1216, 1555, 1668, 1775, 1803, 1825];
for (let x = 62; x <= 1850; x++) {
    const near = Math.min(...busy.map(b => Math.abs(b - x)));
    const h = 1 + rnd() * 2 + (near < 15 ? rnd() * 9 : rnd() * rnd() * 4) + (x < 130 ? rnd() * 18 : 0);
    volRed += `M${x + .5} 1037v${(-h).toFixed(0)}`;
    volBlue += `M${x + .5} 1037v${(-h * rnd() * .8).toFixed(0)}`;
}
[[60, 888], [77, 992], [69, 1003], [92, 995], [102, 993], [178, 997], [218, 1023], [240, 1014], [245, 1014], [339, 1021], [144, 1012],
    [897, 1025], [945, 1022], [1124, 1017], [1143, 1014], [1172, 1023], [1216, 1024], [829, 1025], [1042, 1025], [1543, 1024], [1559, 1012],
    [1675, 1009], [1668, 1020], [1801, 1011], [1850, 960], [1382, 1025], [1726, 1026]].forEach(v => { volRed += `M${v[0] + .5} 1037V${v[1]}`; });
path(volRed, '#e8200f', 1);
path(volBlue, '#1a5fc8', 1);
rect(990, 77, 991, 1038, '#ff0000');

svg.innerHTML = html;

// notes drawn over the plot: [y, left or null, right or null, text, color]
const notes = [
    [124, 1506, null, '최고 4,150 (-7,23%, 14:41)', '#ff0000'],
    [835, 64, null, '최저 3,210 (19,94%, 15:17)', '#0000ff'],
    [437, null, 1862, '피봇2차저항선 3,717 (15,78%)', '#ff0000'],
    [634, null, 1862, '피봇1차저항선 3,465 (7,65%)', '#ff00cc'],
    [727, null, 1862, '당일시가 3,360 (4,67%)', '#00ff00'],
    [814, 1681, null, '(고가+저가+종가)/3가중', '#ff6600'],
    [814, null, 1861, '5: 3,865', '#ff6600'],
    [814, 1752, null, '저가, 지수 24', '#000000'],
    [826, 1802, null, '28', '#c0c0c0'],
    [826, null, 1861, '10: 3,819', '#00ccff'],
    [838, null, 1861, '180: 4,081', '#000000'],
    [838, null, 1861, '60: 3,881', '#000000'],
    [850, null, 1861, '15: 3,825', '#ff0033'],
    [850, null, 1862, '전일종가 3,210 (0,00%)', '#993300'],
    [863, null, 1861, '10: 3,819', '#0000ff'],
    [920, null, 1861, 'Signal 200: 11,099,531', '#993300'],
    [932, null, 1861, 'Signal 100: 11,620,731', '#ff9900'],
    [944, null, 1861, 'Signal 150: 11,152,904', '#00ffff'],
    [944, 1808, null, '54: 55', '#000000'],
    [944, null, 1861, '04', '#000000'],
    [956, 1802, null, '18: 46', '#00ff00'],
    [956, null, 1861, 'OBV: 12,461,538', '#ff9900'],
    [968, null, 1861, 'Signal 24: 10,998,321', '#0000ff']
];
const plot = document.getElementById('plot');
notes.forEach(n => {
    const el = document.createElement('span');
    el.className = 'note';
    el.textContent = n[3];
    el.style.color = n[4];
    el.style.top = `calc(${((n[0] - Y0) / H * 100).toFixed(3)}% - 6px)`;
    if (n[1] !== null) el.style.left = ((n[1] - X0) / W * 100).toFixed(3) + '%';
    else el.style.right = ((X0 + W - n[2]) / W * 100).toFixed(3) + '%';
    plot.appendChild(el);
});

// axes: each label takes the share of height up to its own price
function scale(id, labels) {
    let last = Y0, out = '';
    labels.forEach(l => {
        out += `<li class="${l[0] > 874 ? 'vol' : ''}" style="flex-grow:${l[0] - last}"><span>${l[1]}</span></li>`;
        last = l[0];
    });
    out += `<li class="vol" style="flex-grow:${Y0 + H - last}"></li>`;
    document.getElementById(id).innerHTML = out;
}
scale('scale-left', [[119, '4,145'], [169, '4,073'], [221, '4,001'], [271, '3,929'], [322, '3,857'], [376, '3,785'], [431, '3,713'],
    [486, '3,641'], [542, '3,569'], [600, '3,497'], [659, '3,425'], [719, '3,353'], [780, '3,281'], [843, '3,210'],
    [910, '12,000K'], [942, '10,000K'], [974, '8,000K'], [1005, '6,000K']]);
scale('scale-right', [[110, '100,00'], [203, '90,00'], [296, '80,00'], [390, '70,00'], [483, '60,00'], [576, '50,00'], [669, '40,00'],
    [762, '30,00'], [856, '20,00'], [893, '2,500K'], [923, '2,000K'], [951, '1,500K'], [979, '1,000K'], [1008, '500,000']]);

// time axis: one column per ten minutes
let cells = '<li></li><li class="day">06/21</li>';
const widths = [41, 54];
ticks.forEach((x, i) => {
    const min = 550 + i * 10;
    const text = i < 37 ? String(Math.floor(min / 60)).padStart(2, '0') + ':' + String(min % 60).padStart(2, '0') : '';
    cells += `<li>${text}</li>`;
    widths.push((ticks[i + 1] || 1866) - x);
});
cells += '<li>15:30:0</li>';
widths.push(48);
const times = document.getElementById('times');
times.innerHTML = cells;
times.style.gridTemplateColumns = widths.map(w => `minmax(0, ${w}fr)`).join(' ');
```
